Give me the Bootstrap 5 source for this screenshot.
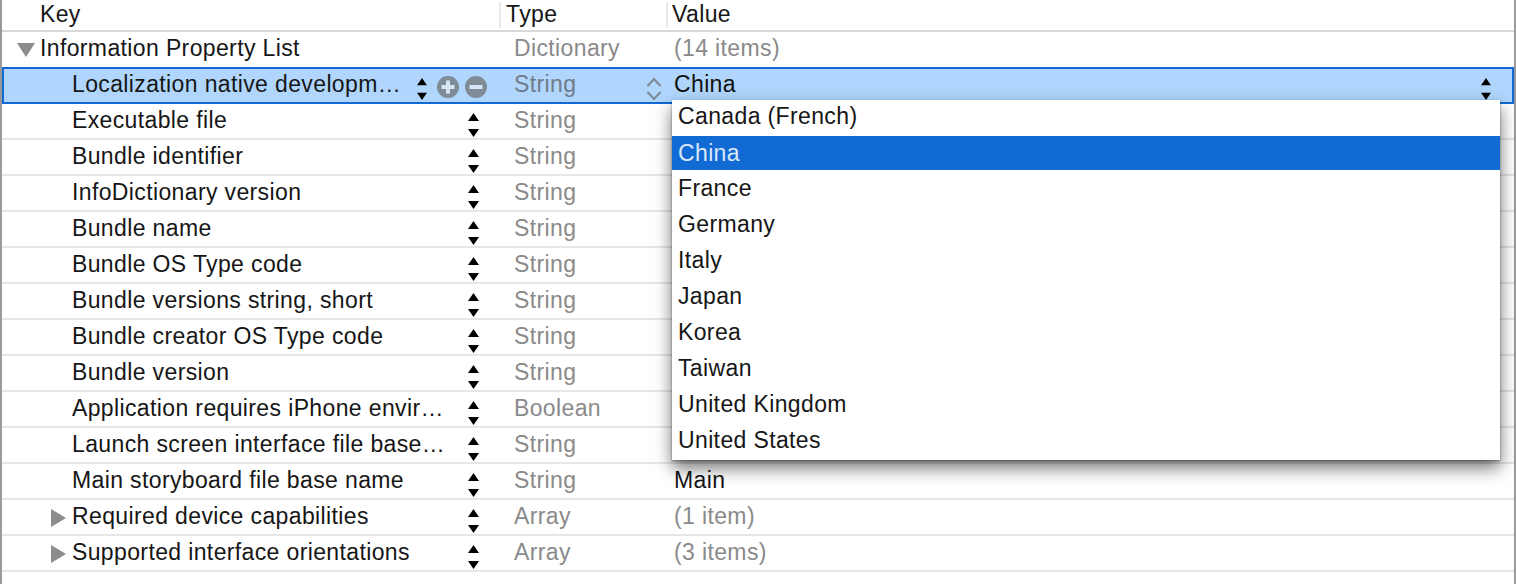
<!DOCTYPE html>
<html lang="en">
<head>
<meta charset="utf-8">
<title>Info.plist</title>
<link href="https://cdn.jsdelivr.net/npm/bootstrap@5.3.0/dist/css/bootstrap.min.css" rel="stylesheet">
<style>
html,body{height:584px;overflow:hidden;background:#fff}
body{font-family:"Liberation Sans",Arial,sans-serif;font-size:23px;color:#161616;letter-spacing:.37px}
.plist{height:584px;border-left:2px solid #999;border-right:2px solid #999;position:relative}
.hdr{height:32px;border-bottom:2px solid #d9d9d9}
.hdr .kc{padding-left:38px;line-height:28px}
.hdr .tc,.hdr .vc{padding-left:5px;border-left:2px solid #e8e8e8;height:26px;margin-top:2px;line-height:24px;color:#161616}
.hdr .vc{padding-left:4px}
.rw{height:36px;border-bottom:2px solid #e6e6e6;line-height:32px}
.rw.first{height:35px;border-bottom:0}
.kc{width:497px;flex:none;padding-left:70px;position:relative;white-space:nowrap}
.tc{width:167px;flex:none;padding-left:15px;color:#8a8a8a;position:relative}
.vc{flex:1;padding-left:8px;position:relative}
.muted-val{color:#8a8a8a}
.rw .lvl0{padding-left:38px}
.twist{position:absolute;fill:#8c8c8c}
.tw-down{left:15px;top:11px}
.tw-right{left:49px;top:9px}
.stp{position:absolute;left:466px;top:9px}
.sel{height:37px;background:#b0d6fd;border:2px solid #1269d3;line-height:30px}
.sel .kc{padding-left:68px}
.sel .tc{padding-left:13px;color:#6f7b88}
.sel .vc{padding-left:6px;color:#111}
.sel .stp{left:413px;top:8px}
.circ{position:absolute;top:7px}
.c1{left:433px}.c2{left:461px}
.chev{position:absolute;left:145px;top:8px}
.vstp{position:absolute;right:21px;top:8px}
.popup{position:absolute;left:670px;top:100px;width:828px;height:360px;background:#fff;box-shadow:0 8px 16px rgba(0,0,0,.55),0 1px 2px rgba(0,0,0,.45);padding-top:1px;z-index:5}
.opt{height:36px;line-height:32px;padding-left:6px}
.opt:first-child{height:35px;line-height:30px}
.opt.on{background:#126ad4;color:#dbe8f8;height:34px;margin-bottom:2px;line-height:34px}
</style>
</head>
<body>
<svg width="0" height="0" class="d-block" aria-hidden="true">
<symbol id="stepper" viewBox="0 0 11 24"><path d="M5.500 0 11 8H0Z"/><path d="M0 16H11L5.500 24Z"/></symbol>
</svg>
<div class="plist">
  <div class="hdr d-flex"><div class="kc">Key</div><div class="tc">Type</div><div class="vc">Value</div></div>
  <div class="rw first d-flex">
    <div class="kc lvl0"><svg class="twist tw-down" width="18" height="14" viewBox="0 0 18 14"><path d="M0 0H18L9 14Z"/></svg>Information Property List</div>
    <div class="tc">Dictionary</div><div class="vc muted-val">(14 items)</div>
  </div>
  <div class="sel d-flex">
    <div class="kc">Localization native developm…
      <svg class="stp" width="10" height="24"><use href="#stepper"/></svg>
      <svg class="circ c1" width="22" height="22" viewBox="0 0 22 22"><circle cx="11" cy="11" r="11" fill="#7f8b96"/><path d="M9 4.500h4V9h4.500v4H13v4.500H9V13H4.500V9H9Z" fill="#d6e6f7"/></svg>
      <svg class="circ c2" width="22" height="22" viewBox="0 0 22 22"><circle cx="11" cy="11" r="11" fill="#7f8b96"/><rect x="4.500" y="9" width="13" height="4" fill="#d6e6f7"/></svg>
    </div>
    <div class="tc">String
      <svg class="chev" width="16" height="24" viewBox="0 0 16 24" fill="none" stroke="#7d8894" stroke-width="2"><path d="M1.500 9 8 2l6.500 7"/><path d="M1.500 15 8 22l6.500-7"/></svg>
    </div>
    <div class="vc">China<svg class="vstp" width="10" height="24"><use href="#stepper"/></svg></div>
  </div>
  <div class="rw d-flex"><div class="kc">Executable file<svg class="stp" width="11" height="24"><use href="#stepper"/></svg></div><div class="tc">String</div><div class="vc"></div></div>
  <div class="rw d-flex"><div class="kc">Bundle identifier<svg class="stp" width="11" height="24"><use href="#stepper"/></svg></div><div class="tc">String</div><div class="vc"></div></div>
  <div class="rw d-flex"><div class="kc">InfoDictionary version<svg class="stp" width="11" height="24"><use href="#stepper"/></svg></div><div class="tc">String</div><div class="vc"></div></div>
  <div class="rw d-flex"><div class="kc">Bundle name<svg class="stp" width="11" height="24"><use href="#stepper"/></svg></div><div class="tc">String</div><div class="vc"></div></div>
  <div class="rw d-flex"><div class="kc">Bundle OS Type code<svg class="stp" width="11" height="24"><use href="#stepper"/></svg></div><div class="tc">String</div><div class="vc"></div></div>
  <div class="rw d-flex"><div class="kc">Bundle versions string, short<svg class="stp" width="11" height="24"><use href="#stepper"/></svg></div><div class="tc">String</div><div class="vc"></div></div>
  <div class="rw d-flex"><div class="kc">Bundle creator OS Type code<svg class="stp" width="11" height="24"><use href="#stepper"/></svg></div><div class="tc">String</div><div class="vc"></div></div>
  <div class="rw d-flex"><div class="kc">Bundle version<svg class="stp" width="11" height="24"><use href="#stepper"/></svg></div><div class="tc">String</div><div class="vc"></div></div>
  <div class="rw d-flex"><div class="kc">Application requires iPhone envir…<svg class="stp" width="11" height="24"><use href="#stepper"/></svg></div><div class="tc">Boolean</div><div class="vc"></div></div>
  <div class="rw d-flex"><div class="kc">Launch screen interface file base…<svg class="stp" width="11" height="24"><use href="#stepper"/></svg></div><div class="tc">String</div><div class="vc"></div></div>
  <div class="rw d-flex"><div class="kc">Main storyboard file base name<svg class="stp" width="11" height="24"><use href="#stepper"/></svg></div><div class="tc">String</div><div class="vc">Main</div></div>
  <div class="rw d-flex"><div class="kc"><svg class="twist tw-right" width="15" height="18" viewBox="0 0 15 18"><path d="M0 0 15 9 0 18Z"/></svg>Required device capabilities<svg class="stp" width="11" height="24"><use href="#stepper"/></svg></div><div class="tc">Array</div><div class="vc muted-val">(1 item)</div></div>
  <div class="rw d-flex"><div class="kc"><svg class="twist tw-right" width="15" height="18" viewBox="0 0 15 18"><path d="M0 0 15 9 0 18Z"/></svg>Supported interface orientations<svg class="stp" width="11" height="24"><use href="#stepper"/></svg></div><div class="tc">Array</div><div class="vc muted-val">(3 items)</div></div>
  <div class="popup">
    <div class="opt">Canada (French)</div>
    <div class="opt on">China</div>
    <div class="opt">France</div>
    <div class="opt">Germany</div>
    <div class="opt">Italy</div>
    <div class="opt">Japan</div>
    <div class="opt">Korea</div>
    <div class="opt">Taiwan</div>
    <div class="opt">United Kingdom</div>
    <div class="opt">United States</div>
  </div>
</div>
<script src="https://cdn.jsdelivr.net/npm/bootstrap@5.3.0/dist/js/bootstrap.bundle.min.js"></script>
</body>
</html>
